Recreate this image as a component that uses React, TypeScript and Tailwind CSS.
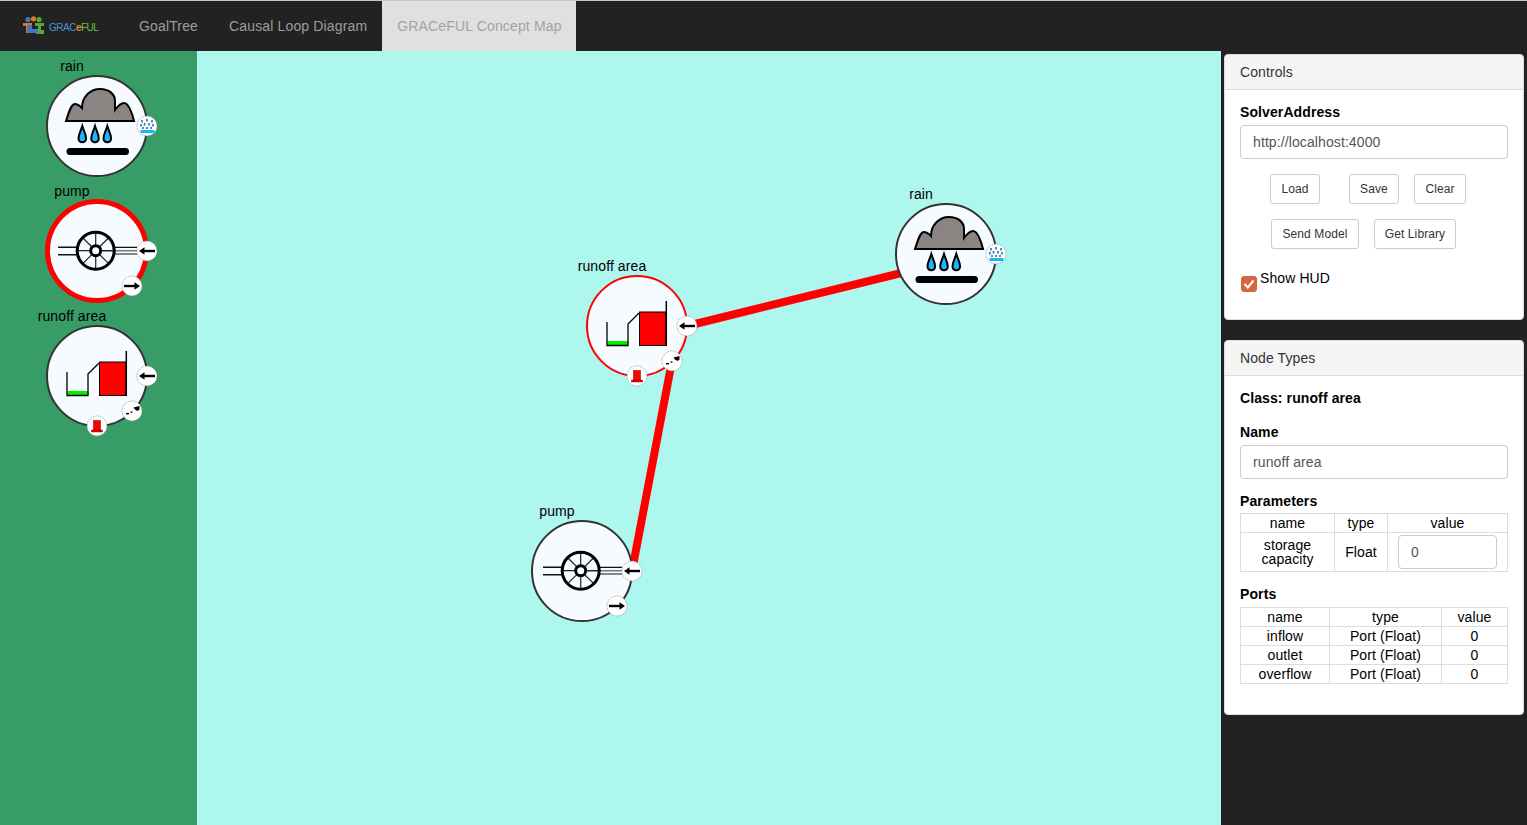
const drops = [-14.7, -2, 10.3];

function RainIcon() {
  return (
    <g>
      <path
        d="M-31,-5 C-28,-14 -26,-22 -22,-22 C-19,-22 -17,-20 -15,-18 C-15,-30 -6,-37 3,-37 C12,-37 18,-32 18,-25 L18,-16 C21,-20 24,-23 27,-23 C31,-23 35,-14 37,-5 Z"
        fill="#8a8583"
        stroke="#000"
        strokeWidth="2"
      />
      {drops.map((x) => (
        <path
          key={x}
          d={`M${x},0 C${x + 1.5},5 ${x + 3.8},8 ${x + 3.8},12.5 A3.8,3.8 0 0 1 ${x - 3.8},12.5 C${x - 3.8},8 ${x - 1.5},5 ${x},0 Z`}
          fill="#1eb6f5"
          stroke="#000"
          strokeWidth="2"
        />
      ))}
      <rect x="-30.5" y="22" width="62.5" height="7" rx="3.5" fill="#000" />
    </g>
  );
}

function PumpIcon() {
  const spokes = [0, 45, 90, 135];
  return (
    <g>
      <path d="M-39,-3.7 H-19 M-39,3.7 H-19" stroke="#111" strokeWidth="1.5" />
      <path d="M4,-0.3 H40" stroke="#777" strokeWidth="1.5" />
      <path d="M17,-3.7 H40 M17,3 H40" stroke="#111" strokeWidth="1.2" />
      <g transform="translate(-1.3,-0.3)">
        {spokes.map((a) => (
          <line key={a} x1="-18" y1="0" x2="18" y2="0" stroke="#222" strokeWidth="1.2" transform={`rotate(${a})`} />
        ))}
        <circle r="18.5" fill="none" stroke="#000" strokeWidth="3" />
        <circle r="5" fill="#fff" stroke="#000" strokeWidth="3" />
      </g>
    </g>
  );
}

function RunoffIcon() {
  return (
    <g>
      <rect x="-29.5" y="15" width="21" height="4" fill="#00f000" />
      <path d="M-30,-4 V19.5 H-9 V-2 L2,-13" fill="none" stroke="#000" strokeWidth="1.3" />
      <rect x="2.5" y="-14" width="26.5" height="33.5" fill="#f00" stroke="#000" strokeWidth="1" />
      <path d="M29.3,-25 V20" stroke="#000" strokeWidth="1.5" />
    </g>
  );
}

function Port({ x, y, kind }: { x: number; y: number; kind: string }) {
  return (
    <g transform={`translate(${x},${y})`}>
      <circle r="10" fill="#fff" stroke="#999" strokeWidth="0.8" strokeDasharray="1.5 1" />
      {kind === "in" && (
        <g>
          <path d="M8,0 H-4" stroke="#000" strokeWidth="2.4" />
          <path d="M-8,0 L-2.5,-3.8 V3.8 Z" fill="#000" />
        </g>
      )}
      {kind === "out" && (
        <g>
          <path d="M-8,0 H4" stroke="#000" strokeWidth="2.4" />
          <path d="M8,0 L2.5,-3.8 V3.8 Z" fill="#000" />
        </g>
      )}
      {kind === "overflow" && (
        <g fill="#000">
          <path d="M1.5,-3.5 L7.5,-5 L7.5,-1.5 L5.5,0 L3,-1.5 Z" />
          <rect x="-6" y="2" width="3" height="1.4" />
          <rect x="-1.5" y="0.5" width="2" height="1.2" />
        </g>
      )}
      {kind === "rain" && (
        <g>
          <path
            d="M-5,-6 V-3.5 M0,-7 V-4.5 M5,-6 V-3.5 M-6,-2 V0.5 M-2.5,-3 V-0.5 M2,-3 V-0.5 M6,-2 V0.5 M-4,1 V3 M0,1 V3 M4,1 V3"
            stroke="#1a78a8"
            strokeWidth="1.6"
          />
          <rect x="-6.5" y="4" width="14" height="3" fill="#1eb6f5" />
        </g>
      )}
      {kind === "hat" && (
        <g>
          <rect x="-3.5" y="-5.5" width="7" height="10" fill="#f00" stroke="#700" strokeWidth="0.5" />
          <rect x="-5.5" y="4" width="11" height="2" fill="#e00" stroke="#500" strokeWidth="0.4" />
        </g>
      )}
    </g>
  );
}

const ports: Record<string, { x: number; y: number; kind: string }[]> = {
  rain: [{ x: 50, y: 0, kind: "rain" }],
  pump: [
    { x: 50, y: 0, kind: "in" },
    { x: 35, y: 35, kind: "out" },
  ],
  "runoff area": [
    { x: 50, y: 0, kind: "in" },
    { x: 35, y: 35, kind: "overflow" },
    { x: 0, y: 50, kind: "hat" },
  ],
};

// 130x126 box, circle centre sits at (65,63)
function ConceptNode({ name, ring = "normal" }: { name: string; ring?: "normal" | "thin" | "thick" }) {
  const stroke = ring === "normal" ? "#333" : "#f00";
  const width = ring === "thick" ? 5 : 2;
  const r = ring === "thick" ? 49.5 : 50;
  return (
    <div className="relative h-[125px] w-[130px]">
      <svg width="130" height="126" viewBox="-65 -63 130 126" className="absolute left-0 top-0 overflow-visible">
        <circle r={r} fill="#f6fbff" stroke={stroke} strokeWidth={width} />
        {name === "rain" && <RainIcon />}
        {name === "pump" && <PumpIcon />}
        {name === "runoff area" && <RunoffIcon />}
        {ports[name].map((p) => (
          <Port key={p.kind} {...p} />
        ))}
      </svg>
      <div className="absolute left-[-20px] top-[-7px] w-[120px] text-center text-[14px] leading-[20px] text-black">{name}</div>
    </div>
  );
}

function Logo() {
  return (
    <div className="flex items-center">
      <svg width="22" height="20" viewBox="0 0 22 20">
        <circle cx="5" cy="3.5" r="2.6" fill="#3f78c0" />
        <circle cx="10.5" cy="2.8" r="2.6" fill="#e2762f" />
        <circle cx="16" cy="3.5" r="2.6" fill="#5aa83a" />
        <path d="M0,7 H9 V10 H6 V17 H3 V10 H0 Z" fill="#e2762f" />
        <path d="M12,7 H21 V10 H18 V14 H21 V18 H13 V14 H15 V10 H12 Z" fill="#5aa83a" />
        <path d="M4,9 H9 V13 H15 V17 H4 Z" fill="#3f78c0" />
      </svg>
      <span className="ml-[4px] pt-[3px] text-[10px] leading-none tracking-[-0.5px]">
        <span className="text-[#4f95d8]">GRAC</span>
        <span className="font-bold text-[#e2862f]">e</span>
        <span className="text-[#6cc242]">FUL</span>
      </span>
    </div>
  );
}

function Btn({ label, className }: { label: string; className: string }) {
  return (
    <button className={`h-[30px] rounded-[3px] border border-[#ccc] bg-white text-center text-[12px] text-[#333] ${className}`}>
      {label}
    </button>
  );
}

function Panel({ title, className, children }: { title: string; className: string; children: React.ReactNode }) {
  return (
    <section className={`rounded-[4px] border border-[#ddd] bg-white ${className}`}>
      <div className="h-[35px] rounded-t-[4px] border-b border-[#ddd] bg-[#f5f5f5] pl-[15px] text-[14px] leading-[34px] text-[#333]">
        {title}
      </div>
      <div className="px-[15px]">{children}</div>
    </section>
  );
}

const cell = "border border-[#ddd] p-0 text-center font-normal text-[14px] leading-[18px] text-black";

function PortsTable() {
  const rows = ["inflow", "outlet", "overflow"];
  return (
    <table className="mt-[3px] w-[268px] table-fixed border-collapse">
      <colgroup>
        <col className="w-[89px]" />
        <col className="w-[112px]" />
        <col />
      </colgroup>
      <thead>
        <tr>
          <th className={cell}>name</th>
          <th className={cell}>type</th>
          <th className={cell}>value</th>
        </tr>
      </thead>
      <tbody>
        {rows.map((r) => (
          <tr key={r}>
            <td className={cell}>{r}</td>
            <td className={cell}>Port (Float)</td>
            <td className={cell}>0</td>
          </tr>
        ))}
      </tbody>
    </table>
  );
}

export default function App() {
  return (
    <div className="flex h-[825px] w-[1527px] flex-col overflow-hidden bg-[#222] font-['Liberation_Sans',sans-serif] tracking-[0.1px]">
      <nav className="flex h-[51px] shrink-0 border-t border-[#c8c8c8] bg-[#222] text-[14px] tracking-[0.15px]">
        <div className="flex w-[139px] items-center pl-[23px]">
          <Logo />
        </div>
        <a className="pr-[31px] leading-[50px] text-[#9d9d9d]">GoalTree</a>
        <a className="pr-[15px] leading-[50px] text-[#9d9d9d]">Causal Loop Diagram</a>
        <a className="bg-[#e0e0e0] pl-[15px] pr-[14px] leading-[50px] text-[#a3a3a3]">GRACeFUL Concept Map</a>
      </nav>

      <div className="flex min-h-0 flex-1">
        <aside className="w-[197px] shrink-0 bg-[#389c66] pl-[32px] pt-[12px]">
          <ConceptNode name="rain" />
          <ConceptNode name="pump" ring="thick" />
          <ConceptNode name="runoff area" />
        </aside>

        <main className="relative w-[1024px] shrink-0 bg-[#aef7ee]">
          <svg width="1024" height="774" className="absolute left-0 top-0">
            <path d="M490,275 L749,211 M475,310 L435,520" stroke="#f00" strokeWidth="8" fill="none" />
          </svg>
          <div className="absolute left-[684px] top-[140px]">
            <ConceptNode name="rain" />
          </div>
          <div className="absolute left-[375px] top-[212px]">
            <ConceptNode name="runoff area" ring="thin" />
          </div>
          <div className="absolute left-[320px] top-[457px]">
            <ConceptNode name="pump" />
          </div>
        </main>

        <div className="flex w-[306px] flex-col gap-[20px] pl-[3px] pt-[3px]">
          <Panel title="Controls" className="h-[266px] w-[300px]">
            <div className="pt-[12px] text-[14px] font-bold leading-[20px] text-black">SolverAddress</div>
            <div className="mt-[3px] h-[34px] w-[268px] rounded-[4px] border border-[#ccc] pl-[12px] text-[14px] leading-[32px] text-[#555]">
              http://localhost:4000
            </div>
            <div className="mt-[15px] flex pl-[30px]">
              <Btn label="Load" className="w-[50px]" />
              <Btn label="Save" className="ml-[29px] w-[50px]" />
              <Btn label="Clear" className="ml-[15px] w-[52px]" />
            </div>
            <div className="mt-[15px] flex gap-[15px] pl-[31px]">
              <Btn label="Send Model" className="w-[88px]" />
              <Btn label="Get Library" className="w-[82px]" />
            </div>
            <div className="mt-[19px] flex items-start pl-[1px]">
              <span className="mt-[8px] flex h-[16px] w-[16px] items-center justify-center rounded-[3px] border border-[#c9673f] bg-[#d6683e]">
                <svg width="12" height="12" viewBox="0 0 12 12">
                  <path d="M1.5,6 L4.8,9.5 L10.5,2.5" fill="none" stroke="#fff" strokeWidth="2" />
                </svg>
              </span>
              <span className="ml-[3px] text-[14px] leading-[20px] text-black">Show HUD</span>
            </div>
          </Panel>

          <Panel title="Node Types" className="h-[375px] w-[300px]">
            <div className="pt-[12px] text-[14px] font-bold leading-[20px] text-black">Class: runoff area</div>
            <div className="mt-[14px] text-[14px] font-bold leading-[20px] text-black">Name</div>
            <div className="mt-[3px] h-[34px] w-[268px] rounded-[4px] border border-[#ccc] pl-[12px] text-[14px] leading-[32px] text-[#555]">
              runoff area
            </div>
            <div className="mt-[12px] text-[14px] font-bold leading-[20px] text-black">Parameters</div>
            <table className="mt-[2px] w-[268px] table-fixed border-collapse">
              <colgroup>
                <col className="w-[94px]" />
                <col className="w-[53px]" />
                <col />
              </colgroup>
              <thead>
                <tr>
                  <th className={cell}>name</th>
                  <th className={cell}>type</th>
                  <th className={cell}>value</th>
                </tr>
              </thead>
              <tbody>
                <tr>
                  <td className={`${cell} !leading-[14px]`}>
                    storage
                    <br />
                    capacity
                  </td>
                  <td className={cell}>Float</td>
                  <td className={cell}>
                    <div className="mx-auto my-[2px] h-[34px] w-[99px] rounded-[4px] border border-[#ccc] pl-[12px] text-left text-[14px] leading-[32px] text-[#555]">
                      0
                    </div>
                  </td>
                </tr>
              </tbody>
            </table>
            <div className="mt-[12px] text-[14px] font-bold leading-[20px] text-black">Ports</div>
            <PortsTable />
          </Panel>
        </div>
      </div>
    </div>
  );
}
